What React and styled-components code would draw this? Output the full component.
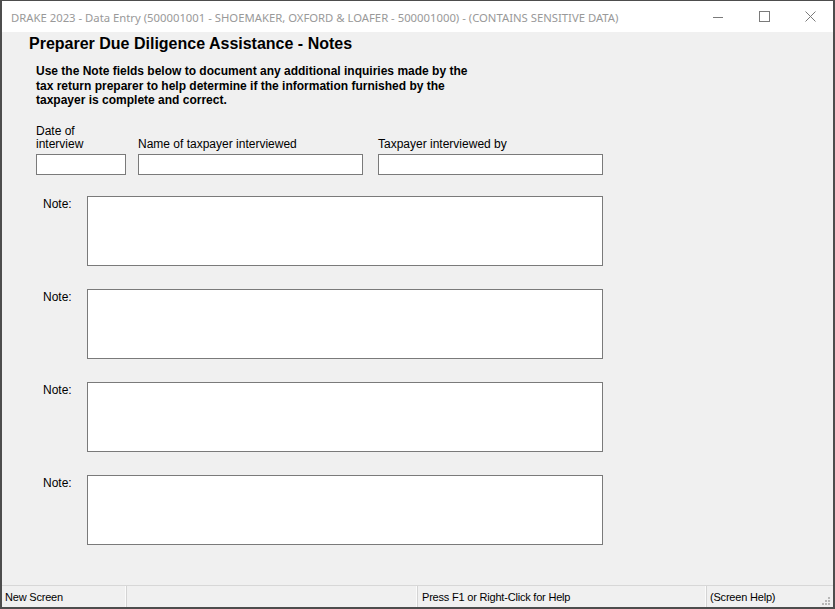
import React from 'react';
import styled, { createGlobalStyle } from 'styled-components';

const GlobalStyle = createGlobalStyle`
  html, body {
    margin: 0;
    padding: 0;
    background: #f0f0f0;
    overflow: hidden;
  }
  * {
    box-sizing: border-box;
  }
`;

const Window = styled.div`
  width: 835px;
  height: 609px;
  display: flex;
  flex-direction: column;
  background: #f0f0f0;
  border-style: solid;
  border-color: #4d4d4d;
  border-width: 1px 2px 2px 2px;
  font-family: "Liberation Sans", Arial, sans-serif;
  color: #000;
`;

const TitleBar = styled.div`
  height: 31px;
  flex: none;
  display: flex;
  align-items: center;
  background: #fff;
`;

const TitleText = styled.div`
  flex: 1;
  padding-left: 9px;
  font-family: "Noto Sans", "Open Sans", sans-serif;
  font-size: 11.3px;
  color: #999;
  white-space: nowrap;
  overflow: hidden;
  padding-top: 1px;
`;

const CaptionButton = styled.div`
  width: 46px;
  height: 31px;
  display: flex;
  align-items: center;
  justify-content: center;
  color: #7a7a7a;
`;

const Content = styled.div`
  flex: 1;
  padding-top: 3px;
`;

const Heading = styled.h1`
  margin: 0 0 0 27px;
  font-size: 16px;
  line-height: 18px;
  font-weight: bold;
`;

const Section = styled.div`
  padding-left: 34px;
`;

const Intro = styled.p`
  margin: 11px 0 0;
  width: 440px;
  font-size: 12px;
  line-height: 14.5px;
  font-weight: bold;
`;

const FieldRow = styled.div`
  display: flex;
  align-items: flex-end;
  margin-top: 17px;
`;

const Field = styled.div`
  display: flex;
  flex-direction: column;
  width: ${(p) => p.$width}px;
  margin-left: ${(p) => p.$offset || 0}px;
`;

const FieldLabel = styled.label`
  font-size: 12px;
  line-height: 13px;
  margin-bottom: 3px;
`;

const TextBox = styled.div`
  height: 21px;
  background: #fff;
  border: 1px solid #7a7a7a;
`;

const NoteList = styled.div`
  display: flex;
  flex-direction: column;
  gap: 23px;
  margin-top: 21px;
`;

const NoteRow = styled.div`
  display: flex;
  padding-left: 7px;
`;

const NoteLabel = styled.label`
  width: 44px;
  font-size: 12px;
  line-height: 14px;
  padding-top: 1px;
`;

const NoteBox = styled.div`
  width: 516px;
  height: 70px;
  background: #fff;
  border: 1px solid #7a7a7a;
`;

const StatusBar = styled.div`
  height: 22px;
  flex: none;
  display: flex;
  border-top: 1px solid #d7d7d7;
  font-size: 11px;
  letter-spacing: -0.2px;
  position: relative;
`;

const StatusCell = styled.div`
  width: ${(p) => (p.$width ? `${p.$width}px` : 'auto')};
  flex: ${(p) => (p.$width ? 'none' : '1')};
  display: flex;
  align-items: center;
  padding-left: ${(p) => p.$pad ?? 3}px;
  padding-top: 1px;
  border-right: ${(p) => (p.$last ? 'none' : '1px solid #d4d4d4')};
  box-shadow: ${(p) => (p.$last ? 'none' : 'inset -1px 0 0 #fbfbfb')};
  white-space: nowrap;
`;

const Grip = styled.svg`
  position: absolute;
  right: 2px;
  bottom: 1px;
`;

const noteCount = [1, 2, 3, 4];

function App() {
  return (
    <>
      <GlobalStyle />
      <Window>
        <TitleBar>
          <TitleText>
            DRAKE 2023 - Data Entry (500001001 - SHOEMAKER, OXFORD &amp; LOAFER - 500001000) - (CONTAINS SENSITIVE DATA)
          </TitleText>
          <CaptionButton>
            <svg width="10" height="10" viewBox="0 0 10 10">
              <line x1="0" y1="5.5" x2="10" y2="5.5" stroke="currentColor" strokeWidth="1" />
            </svg>
          </CaptionButton>
          <CaptionButton>
            <svg width="11" height="11" viewBox="0 0 11 11">
              <rect x="0.5" y="0.5" width="10" height="10" fill="none" stroke="currentColor" strokeWidth="1" />
            </svg>
          </CaptionButton>
          <CaptionButton>
            <svg width="11" height="11" viewBox="0 0 11 11">
              <path d="M0.5 0.5 L10.5 10.5 M10.5 0.5 L0.5 10.5" stroke="currentColor" strokeWidth="1" />
            </svg>
          </CaptionButton>
        </TitleBar>

        <Content>
          <Heading>Preparer Due Diligence Assistance - Notes</Heading>
          <Section>
            <Intro>
              Use the Note fields below to document any additional inquiries made by the tax return
              preparer to help determine if the information furnished by the taxpayer is complete and
              correct.
            </Intro>

            <FieldRow>
              <Field $width={90}>
                <FieldLabel>Date of<br />interview</FieldLabel>
                <TextBox />
              </Field>
              <Field $width={225} $offset={12}>
                <FieldLabel>Name of taxpayer interviewed</FieldLabel>
                <TextBox />
              </Field>
              <Field $width={225} $offset={15}>
                <FieldLabel>Taxpayer interviewed by</FieldLabel>
                <TextBox />
              </Field>
            </FieldRow>

            <NoteList>
              {noteCount.map((n) => (
                <NoteRow key={n}>
                  <NoteLabel>Note:</NoteLabel>
                  <NoteBox />
                </NoteRow>
              ))}
            </NoteList>
          </Section>
        </Content>

        <StatusBar>
          <StatusCell $width={125}>New Screen</StatusCell>
          <StatusCell $width={291} />
          <StatusCell $width={289} $pad={4}>Press F1 or Right-Click for Help</StatusCell>
          <StatusCell $last>(Screen Help)</StatusCell>
          <Grip width="10" height="10" viewBox="0 0 10 10">
            {[
              [7, 1], [4, 4], [7, 4], [1, 7], [4, 7], [7, 7],
            ].map(([x, y]) => (
              <rect key={`${x}-${y}`} x={x} y={y} width="2" height="2" fill="#b8b8b8" />
            ))}
          </Grip>
        </StatusBar>
      </Window>
    </>
  );
}

export default App;
